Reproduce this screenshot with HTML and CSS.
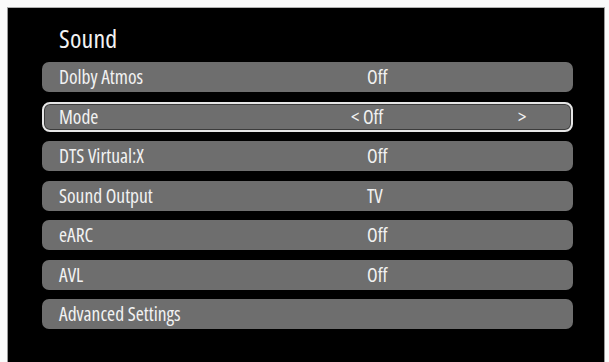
FILE: index.html
```html
<!DOCTYPE html>
<html>
<head>
<meta charset="utf-8">
<link rel="stylesheet" href="styles.css">
</head>
<body>
<div class="screen">
  <h1 class="title">Sound</h1>
  <ul class="menu">
    <li class="row"><span class="label">Dolby Atmos</span><span class="value">Off</span></li>
    <li class="row selected"><span class="label">Mode</span><span class="value">&lt; Off</span><span class="arrow-right">&gt;</span></li>
    <li class="row"><span class="label">DTS Virtual:X</span><span class="value">Off</span></li>
    <li class="row"><span class="label">Sound Output</span><span class="value">TV</span></li>
    <li class="row"><span class="label">eARC</span><span class="value">Off</span></li>
    <li class="row"><span class="label">AVL</span><span class="value">Off</span></li>
    <li class="row"><span class="label">Advanced Settings</span><span class="value"></span></li>
  </ul>
</div>
</body>
</html>
```
FILE: styles.css
```css
html, body {
  margin: 0;
  padding: 0;
  background: #fafafa;
  height: 100%;
  overflow: hidden;
}
body {
  font-family: "Open Sans", "DejaVu Sans Condensed", sans-serif;
  font-stretch: 80%;
  color: #f2f2f2;
}
.screen {
  margin: 7px 4px 0 7px;
  height: 355px;
  background: #000;
  border-left: 1px solid #9a9a9a;
  border-right: 1px solid #9a9a9a;
  border-top: 1px solid #b0b0b0;
  box-sizing: border-box;
  padding-top: 12px;
}
.title {
  margin: 0 0 0 51px;
  font-size: 26px;
  font-stretch: 75%;
  font-weight: normal;
  line-height: 36px;
  height: 42px;
  letter-spacing: 0.2px;
}
.menu {
  list-style: none;
  margin: 0 0 0 34px;
  padding: 0;
  width: 531px;
  display: flex;
  flex-direction: column;
  gap: 9.5px;
}
.row {
  height: 30px;
  box-sizing: border-box;
  background: #6e6e6e;
  border-radius: 7px;
  display: grid;
  grid-template-columns: 308px 151px 1fr;
  align-items: center;
  padding-left: 17px;
  font-size: 19.5px;
  line-height: 30px;
}
.row.selected {
  border: 2px solid #e6e6e6;
  border-radius: 8px;
  padding-left: 15px;
  line-height: 26px;
  box-shadow: inset 0 0 0 1px #3c3c3c;
}
.selected .value {
  margin-left: -16px;
}
```
